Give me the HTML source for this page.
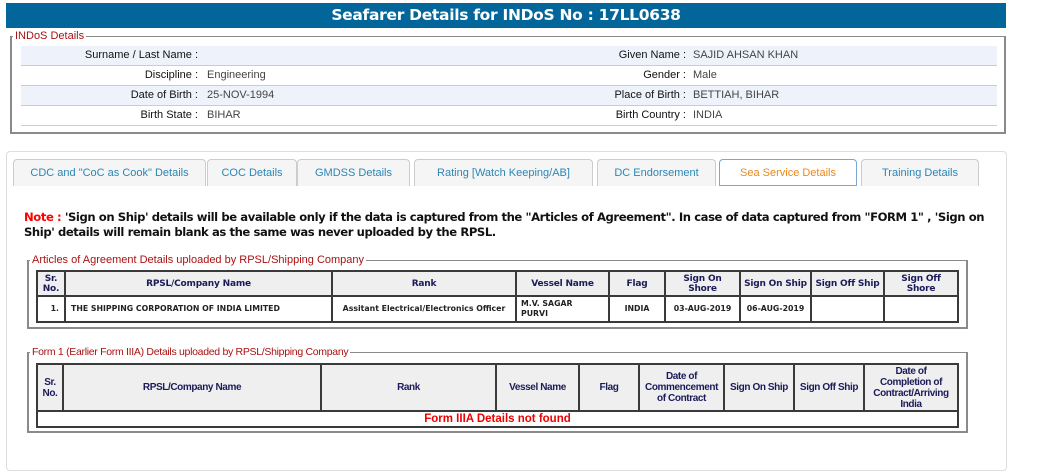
<!DOCTYPE html>
<html><head><meta charset="utf-8"><style>
*{box-sizing:border-box;margin:0;padding:0}
body{width:1057px;height:460px;background:#fff;position:relative;overflow:hidden;font-family:"Liberation Sans",Arial,sans-serif}
.abs{position:absolute}
.hdr{left:6px;top:3px;width:1000px;height:25px;background:#02669a;color:#fff;font:bold 15.5px "DejaVu Sans",sans-serif;letter-spacing:-0.3px;text-align:center;line-height:25px}
.fs{border:2px solid #8a8a8a;border-top:1px solid #8a8a8a}
.leg{position:absolute;top:-8px;background:#fff;color:#a11;font-size:11px;padding:0 2px;line-height:14px}
.row{position:absolute;left:9px;width:976px;height:20px;border-bottom:1px solid #ccc;font-size:11px;color:#444;line-height:19px}
.row.a{background:#eef3fb}
.l{position:absolute;text-align:right;color:#111}
.v{position:absolute}
.panel{left:6px;top:151px;width:1001px;height:320px;border:1px solid #ddd;border-radius:4px}
.tab{position:absolute;top:159px;height:27px;border:1px solid #ccc;border-bottom:none;border-radius:4px 4px 0 0;background:#f5f5f5;color:#2a87b5;font-size:11px;text-align:center;line-height:26px}
.tab.act{background:#fff;border:1px solid #7aa6d1;color:#e8891d}
.note{left:24px;top:210px;width:968px;font:bold 11.6px "DejaVu Sans",sans-serif;letter-spacing:-0.42px;color:#111;line-height:15px}
table{border-collapse:collapse;table-layout:fixed;position:absolute}
td,th{border:2px solid #3a3a3a;text-align:center;vertical-align:middle}
.t1 th{background:#efefef;color:#1b1b5a;font:bold 9px "DejaVu Sans",sans-serif;line-height:10px;white-space:nowrap;letter-spacing:-0.2px}
.t1 td{font:bold 7.8px "DejaVu Sans",sans-serif;color:#222;line-height:10px}
.t2 th{background:#efefef;color:#1b1b5a;font:bold 10px "Liberation Sans",sans-serif;letter-spacing:-0.4px;line-height:11px;white-space:nowrap}
.t2 td{font:bold 11.5px "Liberation Sans",sans-serif;color:#e00}
</style></head><body>
<div class="abs hdr">Seafarer Details for INDoS No : 17LL0638</div>
<div class="abs fs" style="left:10px;top:36px;width:996px;height:98px">
<div class="leg" style="left:1px">INDoS Details</div>
<div class="row a" style="top:9px"><span class="l" style="right:799px">Surname / Last Name :</span><span class="l" style="right:311px">Given Name :</span><span class="v" style="left:672px">SAJID AHSAN KHAN</span></div>
<div class="row" style="top:29px"><span class="l" style="right:799px">Discipline :</span><span class="v" style="left:186px">Engineering</span><span class="l" style="right:311px">Gender :</span><span class="v" style="left:672px">Male</span></div>
<div class="row a" style="top:49px"><span class="l" style="right:799px">Date of Birth :</span><span class="v" style="left:186px">25-NOV-1994</span><span class="l" style="right:311px">Place of Birth :</span><span class="v" style="left:672px">BETTIAH, BIHAR</span></div>
<div class="row" style="top:69px"><span class="l" style="right:799px">Birth State :</span><span class="v" style="left:186px">BIHAR</span><span class="l" style="right:311px">Birth Country :</span><span class="v" style="left:672px">INDIA</span></div>
</div>
<div class="abs panel"></div>
<div class="tab" style="left:13px;width:193px">CDC and "CoC as Cook" Details</div>
<div class="tab" style="left:207px;width:90px">COC Details</div>
<div class="tab" style="left:297px;width:113px">GMDSS Details</div>
<div class="tab" style="left:414px;width:179px">Rating [Watch Keeping/AB]</div>
<div class="tab" style="left:597px;width:119px">DC Endorsement</div>
<div class="tab act" style="left:719px;width:138px">Sea Service Details</div>
<div class="tab" style="left:861px;width:118px">Training Details</div>
<div class="abs note"><span style="color:#f00">Note : </span>'Sign on Ship' details will be available only if the data is captured from the "Articles of Agreement". In case of data captured from "FORM 1" , 'Sign on Ship' details will remain blank as the same was never uploaded by the RPSL.</div>

<div class="abs fs" style="left:27px;top:260px;width:941px;height:69px">
<div class="leg" style="left:1px">Articles of Agreement Details uploaded by RPSL/Shipping Company</div></div>
<table class="t1" style="left:36px;top:270px;width:921px">
<colgroup><col style="width:28px"><col style="width:267px"><col style="width:184px"><col style="width:93px"><col style="width:56px"><col style="width:75px"><col style="width:71px"><col style="width:73px"><col style="width:74px"></colgroup>
<tr style="height:25px"><th>Sr.<br>No.</th><th>RPSL/Company Name</th><th>Rank</th><th>Vessel Name</th><th>Flag</th><th>Sign On<br>Shore</th><th>Sign On Ship</th><th>Sign Off Ship</th><th>Sign Off<br>Shore</th></tr>
<tr style="height:26px"><td style="text-align:right;padding-right:5px">1.</td><td style="text-align:left;padding-left:5px">THE SHIPPING CORPORATION OF INDIA LIMITED</td><td>Assitant Electrical/Electronics Officer</td><td style="text-align:left;padding-left:4px">M.V. SAGAR<br>PURVI</td><td>INDIA</td><td>03-AUG-2019</td><td>06-AUG-2019</td><td></td><td></td></tr>
</table>

<div class="abs fs" style="left:27px;top:352px;width:941px;height:81px">
<div class="leg" style="left:1px;font-size:10.5px;letter-spacing:-0.3px">Form 1 (Earlier Form IIIA) Details uploaded by RPSL/Shipping Company</div></div>
<table class="t2" style="left:36px;top:363px;width:921px">
<colgroup><col style="width:26px"><col style="width:258px"><col style="width:175px"><col style="width:83px"><col style="width:60px"><col style="width:85px"><col style="width:70px"><col style="width:70px"><col style="width:94px"></colgroup>
<tr style="height:47px"><th>Sr.<br>No.</th><th>RPSL/Company Name</th><th>Rank</th><th>Vessel Name</th><th>Flag</th><th>Date of<br>Commencement<br>of Contract</th><th>Sign On Ship</th><th>Sign Off Ship</th><th>Date of<br>Completion of<br>Contract/Arriving<br>India</th></tr>
<tr style="height:16px"><td colspan="9" style="line-height:12px">Form IIIA Details not found</td></tr>
</table>
</body></html>
